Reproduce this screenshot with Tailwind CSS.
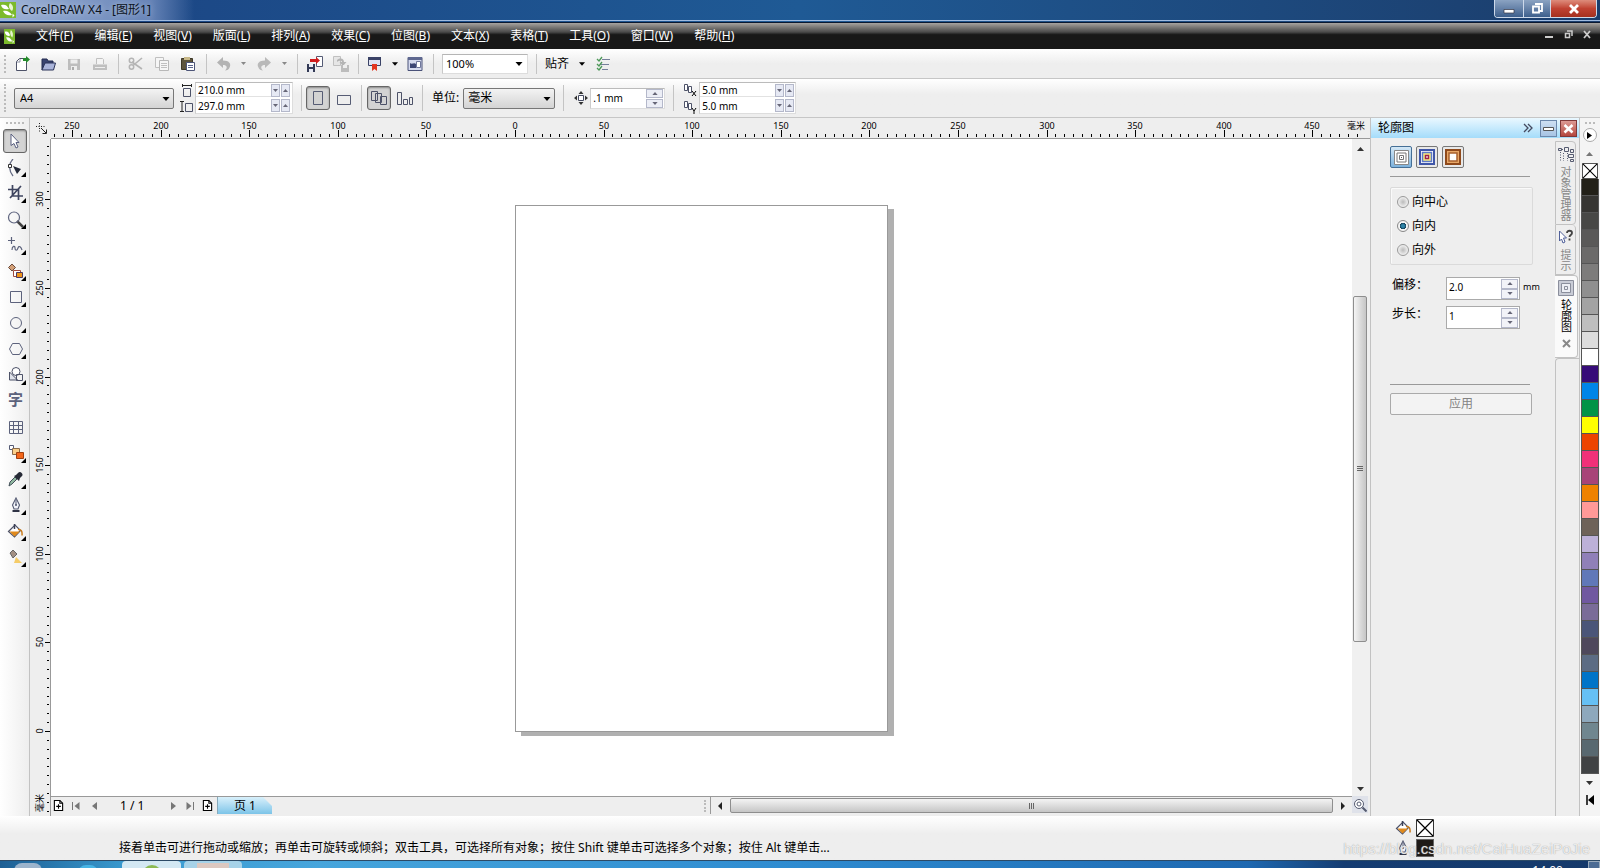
<!DOCTYPE html>
<html lang="zh-CN">
<head>
<meta charset="utf-8">
<title>CorelDRAW X4 - [图形1]</title>
<script src="https://cdn.jsdelivr.net/npm/@tailwindcss/browser@4"></script>
</head>
<body class="h-screen flex flex-col overflow-hidden bg-[#eee] text-black text-[12px] leading-4 font-['Noto_Sans','Noto_Sans_CJK_SC',sans-serif] select-none">

<svg class="hidden">
  <defs>
    <linearGradient id="face" x1="0" y1="0" x2="0" y2="1"><stop offset="0" stop-color="#fff"/><stop offset="1" stop-color="#d5d9e0"/></linearGradient>
    <symbol id="fly" viewBox="0 0 5 5"><path d="M5 0v5H0z" fill="#000"/></symbol>
    <symbol id="down" viewBox="0 0 7 4"><path d="M0 0h7L3.500 4z" fill="currentColor"/></symbol>
    <symbol id="up" viewBox="0 0 7 4"><path d="M0 4h7L3.500 0z" fill="currentColor"/></symbol>
    <symbol id="bucket" viewBox="0 0 16 16"><path d="M1.500 8.500 8 2l5.500 5.500L7.500 14z" fill="#fff" stroke="#4d5268" stroke-width="1.200"/><path d="M2.500 8.500h10.500L7.500 13.500z" fill="#e08a1c"/><path d="M7.500 1v5" stroke="#3a3f55" stroke-width="1.500"/><path d="M11 6.500c3-.5 4.500 1.500 4 6" fill="none" stroke="#c97a1a" stroke-width="1.500"/></symbol>
    <symbol id="nib" viewBox="0 0 16 16"><path d="M8 1 4.500 8l1.500 4h4l1.500-4z" fill="#f2f4fa" stroke="#545a72" stroke-width="1.100"/><path d="M8 3v5" stroke="#545a72"/><circle cx="8" cy="8" r="1" fill="#545a72"/><path d="M4.500 13h7v2h-7z" fill="#2e3244"/></symbol>
    <symbol id="nocolor" viewBox="0 0 18 18"><path d="M.5.5h17v17H.5z" fill="#fff" stroke="#333"/><path d="m1 1 16 16M17 1 1 17" stroke="#000" stroke-width="1.200"/></symbol>
    <symbol id="addpage" viewBox="0 0 12 14"><path d="M1.500 1.500h6l3 3v8h-9z" fill="#fff" stroke="#000" stroke-width="1.200"/><path d="M7.500 1.500v3h3M6 5.500v5M3.500 8h5" fill="none" stroke="#000" stroke-width="1.200"/></symbol>
    <symbol id="leaf" viewBox="0 0 16 16"><path d="M0 0h16v16H0z" fill="#7cba2c"/><path d="M1 3c4-1 6 0 8 4-4 1-7 0-8-4z" fill="#fff"/><path d="M10 1c3 2 4 5 2 8-3-2-4-5-2-8z" fill="#e7f5cf"/><path d="M3 9c4-1 7 1 9 4-4 1-7 0-9-4z" fill="#fff"/><path d="m12.500 11.500 2 2-2 2" fill="#fff"/></symbol>
  </defs>
</svg>

<!-- Title bar -->
<header class="h-[23px] shrink-0 flex items-start justify-between border-b border-[#0a1830] bg-linear-to-r from-[#1b4382] via-[#1f5a95] to-[#1b3d6c]">
  <div class="h-[21px] flex flex-1 items-center gap-[5px] border-b border-[#9fbbe0] bg-linear-to-r from-[#9fb3d6] from-0% via-[#6885b8] via-10% to-transparent to-13%">
    <svg class="size-4"><use href="#leaf"/></svg>
    <h1 class="text-[12px] text-[#0b1220] [text-shadow:0_0_6px_#fff8]">CorelDRAW X4 - [图形1]</h1>
  </div>
  <div class="h-[21px] flex border-b border-[#9fbbe0] pr-[3px]">
    <div class="h-[18px] flex rounded-b border border-t-0 border-[#cdd9ea] overflow-hidden">
      <button aria-label="最小化" class="w-7 flex justify-center items-center bg-linear-to-b from-[#8ba3c2] via-[#6682a8] via-50% to-[#3d5f8c]"><svg class="w-3 h-4"><path d="M1 8.500h10v3.500H1z" fill="#fff" stroke="#334" stroke-width=".7"/></svg></button>
      <button aria-label="还原" class="w-[27px] flex justify-center items-center border-l border-[#cdd9ea] bg-linear-to-b from-[#8ba3c2] via-[#6682a8] via-50% to-[#3d5f8c]"><svg class="w-3 h-4"><path d="M4 3h7v7h-2.500M2 5.500h6v6H2z" fill="none" stroke="#fff" stroke-width="1.800"/></svg></button>
      <button aria-label="关闭" class="w-[46px] flex justify-center items-center border-l border-[#cdd9ea] bg-linear-to-b from-[#dd8c7c] via-[#c04232] via-50% to-[#a5301f]"><svg class="w-3 h-4"><path d="m2 4 8 8M10 4l-8 8" stroke="#fff" stroke-width="2.800"/></svg></button>
    </div>
  </div>
</header>

<!-- Menu -->
<nav class="h-[26px] shrink-0 flex items-center bg-linear-to-b from-[#a8a4a0] from-0% via-[#4a4a4a] via-35% to-[#181818] to-45% text-white text-[12px]">
  <svg class="w-[11px] h-[15px] ml-1 mr-[21px]" viewBox="0 0 16 16" preserveAspectRatio="none"><use href="#leaf"/></svg>
  <div class="flex gap-[21px]">
    <button>文件(<u>F</u>)</button><button>编辑(<u>E</u>)</button><button>视图(<u>V</u>)</button><button>版面(<u>L</u>)</button><button>排列(<u>A</u>)</button><button>效果(<u>C</u>)</button><button>位图(<u>B</u>)</button><button>文本(<u>X</u>)</button><button>表格(<u>T</u>)</button><button>工具(<u>O</u>)</button><button>窗口(<u>W</u>)</button><button>帮助(<u>H</u>)</button>
  </div>
  <div class="ml-auto flex gap-[10px] pr-2 pb-1">
    <button aria-label="最小化文档"><svg class="size-[9px]"><path d="M0 6h8v2H0z" fill="#ccc"/></svg></button>
    <button aria-label="还原文档"><svg class="size-[9px]"><path d="M3 1h5v5M1.500 3.500h4v4h-4z" fill="none" stroke="#ccc" stroke-width="1.500"/></svg></button>
    <button aria-label="关闭文档"><svg class="size-[9px]"><path d="m1 1 6 7M7 1 1 8" stroke="#ccc" stroke-width="1.800"/></svg></button>
  </div>
</nav>

<!-- Standard toolbar -->
<div class="h-[30px] shrink-0 flex items-center bg-linear-to-b from-white to-[#eee] to-50% border-b border-[#c6c6c6] pl-1">
  <i class="h-[18px] border-l-2 border-dotted border-[#bbb]"></i>
  <div class="flex items-center gap-[10px] ml-2">
    <button aria-label="新建"><svg class="size-4"><path d="M2.500 5.500 5.500 2.500h7v12h-10z" fill="#fff" stroke="#4d5268"/><path d="M6 3v3H3" fill="none" stroke="#8c91a3"/><path d="M9 5h3v2l4-3.500L12 0v2H9z" fill="#258a2c"/></svg></button>
    <button aria-label="打开"><svg class="size-4"><path d="M2 14V3h5l1 2h5v3" fill="#3a4470" stroke="#232b50"/><path d="m2 14 3-7h10.500l-2 7z" fill="#aab4da" stroke="#2b3358"/></svg></button>
    <button aria-label="保存" disabled><svg class="size-4"><path d="M2 3h12v11H2z" fill="#bdbdbd"/><path d="M4.500 3.500h7v4h-7zM5 10h6v4H5z" fill="#ededed"/><path d="M6 11h2v3H6z" fill="#aaa"/></svg></button>
    <button aria-label="打印" disabled><svg class="size-4"><path d="M4.500 8V2.500h6l1 1V8" fill="#f4f4f4" stroke="#c0c0c0"/><path d="M1 8.500h14V14H1z" fill="#bfbfbf"/><path d="M3 11.500h10" stroke="#eee"/></svg></button>
  </div>
  <i class="w-px h-[20px] bg-[#c4c4c4] ml-[10px]"></i>
  <div class="flex items-center gap-[10px] ml-[9px]">
    <button aria-label="剪切" disabled><svg class="size-4"><path d="m14 2-9 7.500M14 13 4 6" stroke="#b4b4b4" stroke-width="1.600"/><circle cx="3.500" cy="4.500" r="2.200" fill="none" stroke="#b4b4b4" stroke-width="1.500"/><circle cx="3.500" cy="11" r="2.200" fill="none" stroke="#b4b4b4" stroke-width="1.500"/></svg></button>
    <button aria-label="复制" disabled><svg class="size-4"><path d="M1.500 1.500h8v10h-8z" fill="#f6f6f6" stroke="#c0c0c0"/><path d="M5.500 4.500h9v10h-9z" fill="#f6f6f6" stroke="#b8b8b8"/><path d="M7 7.500h6M7 9.500h6M7 11.500h6" stroke="#c0c0c0"/></svg></button>
    <button aria-label="粘贴"><svg class="size-4"><path d="M1.500 2.500h11v11h-11z" fill="#5d543c" stroke="#3e3828"/><path d="M4 1h6v3H4z" fill="#c8b98a"/><path d="M6.500 6.500h8v8h-8z" fill="#fff" stroke="#4d5578"/><path d="M8 9.500h5M8 11.500h5" stroke="#5b648c"/></svg></button>
  </div>
  <i class="w-px h-[20px] bg-[#c4c4c4] ml-[10px]"></i>
  <div class="flex items-center ml-[9px] text-[#888]">
    <button aria-label="撤消" disabled><svg class="size-4"><path d="M1 6.500 7 1v3.500c6 0 8 3 7 6-1 3-3 4-5 4 3-3 2-5.500-2-5.500V12z" fill="#b3b3b3"/></svg></button>
    <svg class="w-[5px] h-[3px] ml-[9px]"><use href="#down"/></svg>
    <button aria-label="重做" disabled class="ml-[10px]"><svg class="size-4"><path d="M15 6.500 9 1v3.500c-6 0-8 3-7 6 1 3 3 4 5 4-3-3-2-5.500 2-5.500V12z" fill="#b9b9b9"/></svg></button>
    <svg class="w-[5px] h-[3px] ml-[10px]"><use href="#down"/></svg>
  </div>
  <i class="w-px h-[20px] bg-[#c4c4c4] ml-[10px]"></i>
  <div class="flex items-center gap-2 ml-2">
    <button aria-label="导入"><svg class="size-[18px]"><path d="M10.500 1.500h6v10h-6z" fill="#fff" stroke="#555b75"/><path d="M4 4h6V2l4 3.500L10 9V7H4z" fill="#cf1c1c"/><path d="M1 9h8v8H1z" fill="#333a55"/><path d="M3 9h4v3H3zM3 14h4v3H3z" fill="#e8ebf5"/></svg></button>
    <button aria-label="导出" disabled><svg class="size-[18px]"><path d="M1.500 1.500h7v9h-7z" fill="#e6e6e6" stroke="#c0c0c0"/><path d="M5 5c4-3 7-1 7 2h2.500L11 11 7.500 7H10c0-1-2-2-5 0z" fill="#b4b4b4"/><path d="M9 10h8v7H9z" fill="#bcbcbc"/><path d="M11 10h4v3h-4z" fill="#eee"/></svg></button>
  </div>
  <i class="w-px h-[20px] bg-[#c4c4c4] ml-2"></i>
  <button aria-label="应用程序启动器" class="ml-2"><svg class="size-[16px]"><path d="M1.500 1.500h12v8h-12z" fill="#dfe3f2" stroke="#3a4266"/><path d="M1 1h13v3H1z" fill="#3a4266"/><path d="M5 8h5v7l-2.500-2L5 15z" fill="#e23522"/></svg></button>
  <svg class="w-[6px] h-[4px] ml-[9px] mr-[9px]"><use href="#down"/></svg>
  <button aria-label="欢迎屏幕"><svg class="size-[16px]"><path d="M1 1.500h14v13H1z" fill="#d5daee" stroke="#4a5279"/><path d="M1 1h14v3H1z" fill="#5f6890"/><path d="M3 7c2 2 4-1 6 1v4H3z" fill="#3c4674"/><path d="M9.500 5.500h4v6h-4z" fill="#fff" stroke="#6f779b"/></svg></button>
  <i class="w-px h-[20px] bg-[#c4c4c4] ml-[10px] mr-2"></i>
  <div class="relative">
    <select aria-label="缩放级别" class="appearance-none w-[86px] h-5 bg-white border border-[#ddd] border-t-[#b5b5b5] border-l-[#c8c8c8] pl-[3px] text-[11px]"><option>100%</option></select>
    <svg class="absolute right-[5px] top-2 w-[8px] h-[4px] pointer-events-none"><use href="#down"/></svg>
  </div>
  <i class="w-px h-[20px] bg-[#c4c4c4] ml-[8px] mr-[8px]"></i>
  <button class="flex items-center gap-[10px]">贴齐<svg class="w-[6px] h-[4px]"><use href="#down"/></svg></button>
  <button aria-label="选项" class="ml-[11px]"><svg class="size-4"><path d="M6 3.500h8M4 8.500h9M6 13.500h6" stroke="#76809a"/><path d="m1 3 2 2 3-4M1 8l2 2 3-4M1 12l2 2 3-4" fill="none" stroke="#4c9858" stroke-width="1.300"/></svg></button>
</div>

<!-- Property bar -->
<div class="h-[39px] shrink-0 flex items-center bg-linear-to-b from-white to-[#eee] to-40% border-b border-[#c6c6c6] pl-1 text-[10px]">
  <i class="h-[28px] border-l-2 border-dotted border-[#bbb]"></i>
  <div class="relative ml-2">
    <select aria-label="纸张类型" class="appearance-none w-[160px] h-[21px] rounded-[2px] border border-[#777] bg-linear-to-b from-[#f3f3f3] to-[#d4d4d4] pl-[5px] text-[11px]"><option>A4</option></select>
    <svg class="absolute right-[4px] top-[9px] w-[8px] h-[4px] pointer-events-none"><use href="#down"/></svg>
  </div>
  <div class="ml-[6px] flex flex-col gap-[3px]">
    <svg class="size-[13px]"><path d="M3.500 4.500h7v8h-7z" fill="url(#face)" stroke="#4d5268"/><path d="M2.500 0v3M11.500 0v3M3 1.500h8" stroke="#222"/></svg>
    <svg class="size-[13px]"><path d="M5.500 3.500h7v8h-7z" fill="url(#face)" stroke="#4d5268"/><path d="M0 1.500h4M0 11.500h4M2 2v9" stroke="#222"/></svg>
  </div>
  <div class="ml-[2px] grid grid-cols-[75px_auto] gap-y-px border border-[#ddd] border-t-[#bbb] border-l-[#ccc] h-[32px] items-center bg-white pr-[2px]">
    <input aria-label="纸张宽度" value="210.0 mm" class="w-full min-w-0 h-[14px] pl-[2px] border-b border-[#e2e2e2]">
    <span class="flex gap-[1px] text-[#667]"><button aria-label="减" class="w-[9px] h-[13px] bg-[#e6e9f4] border border-[#b4b8ca] grid place-items-center"><svg class="w-[5px] h-[3px]"><use href="#down"/></svg></button><button aria-label="加" class="w-[9px] h-[13px] bg-[#e6e9f4] border border-[#b4b8ca] grid place-items-center"><svg class="w-[5px] h-[3px]"><use href="#up"/></svg></button></span>
    <input aria-label="纸张高度" value="297.0 mm" class="w-full min-w-0 h-[14px] pl-[2px]">
    <span class="flex gap-[1px] text-[#667]"><button aria-label="减" class="w-[9px] h-[13px] bg-[#e6e9f4] border border-[#b4b8ca] grid place-items-center"><svg class="w-[5px] h-[3px]"><use href="#down"/></svg></button><button aria-label="加" class="w-[9px] h-[13px] bg-[#e6e9f4] border border-[#b4b8ca] grid place-items-center"><svg class="w-[5px] h-[3px]"><use href="#up"/></svg></button></span>
  </div>
  <i class="w-px h-[26px] bg-[#c4c4c4] ml-[8px] mr-1"></i>
  <button aria-label="纵向" class="size-[24px] rounded-[3px] border border-[#666] bg-[#d3d3d3] shadow-[inset_0_1px_2px_#888] grid place-items-center"><svg class="size-4"><path d="M3.500 1.500h9v13h-9z" fill="url(#face)" stroke="#565c74"/></svg></button>
  <button aria-label="横向" class="ml-[6px]"><svg class="size-4"><path d="M1.500 5.500h13v9h-13z" fill="url(#face)" stroke="#565c74"/></svg></button>
  <i class="w-px h-[26px] bg-[#c4c4c4] ml-[9px] mr-[5px]"></i>
  <button aria-label="设置所有页面" class="size-[24px] rounded-[3px] border border-[#666] bg-[#d3d3d3] shadow-[inset_0_1px_2px_#888] grid place-items-center"><svg class="size-[18px]"><path d="M1.500 2.500h6v9h-6zM5.500 4.500h6v9h-6zM10.500 7.500h6v8h-6z" fill="url(#face)" stroke="#4d5268"/></svg></button>
  <button aria-label="设置当前页面" class="ml-[5px]"><svg class="size-[18px]"><path d="M1.500 3.500h4v12h-4zM7.500 10.500h4v5h-4zM13.500 8.500h3v7h-3z" fill="url(#face)" stroke="#4d5268"/></svg></button>
  <i class="w-px h-[26px] bg-[#c4c4c4] ml-[8px] mr-[9px]"></i>
  <label for="unit" class="text-[12px]">单位:</label>
  <div class="relative ml-[4px]">
    <select id="unit" class="appearance-none w-[92px] h-[21px] rounded-[2px] border border-[#777] bg-linear-to-b from-[#f3f3f3] to-[#d4d4d4] pl-[4px] text-[12px]"><option>毫米</option></select>
    <svg class="absolute right-[4px] top-[9px] w-[8px] h-[4px] pointer-events-none"><use href="#down"/></svg>
  </div>
  <i class="w-px h-[26px] bg-[#c4c4c4] ml-[8px] mr-[10px]"></i>
  <svg class="size-[14px]"><path d="M7 0 4.500 3h5zM7 14l-2.500-3h5zM0 7l3-2.500v5zM14 7l-3-2.500v5z" fill="#333"/><path d="M4.500 4.500h5v5h-5z" fill="#fff" stroke="#444a60"/></svg>
  <div class="ml-[2px] flex items-center bg-white border border-[#ddd] border-t-[#bbb] border-l-[#ccc] h-[21px] text-[#667]">
    <input aria-label="微调偏移" value=".1 mm" class="w-[55px] pl-[2px] h-full text-black">
    <span class="flex flex-col gap-[1px] pr-[1px]"><button aria-label="加" class="w-[17px] h-[9px] bg-[#eceef6] border border-[#b4b8ca] grid place-items-center"><svg class="w-[6px] h-[3px]"><use href="#up"/></svg></button><button aria-label="减" class="w-[17px] h-[9px] bg-[#eceef6] border border-[#b4b8ca] grid place-items-center"><svg class="w-[6px] h-[3px]"><use href="#down"/></svg></button></span>
  </div>
  <i class="w-px h-[26px] bg-[#c4c4c4] ml-[8px] mr-[9px]"></i>
  <div class="flex flex-col gap-[3px]">
    <svg class="size-[14px]"><path d="M1.500 1.500h3v6h-3zM5.500 3.500h3v6h-3z" fill="#fff" stroke="#4d5268"/><path d="m9 8 4 5M13 8l-4 5" stroke="#000"/></svg>
    <svg class="size-[14px]"><path d="M1.500 1.500h3v6h-3zM5.500 3.500h3v6h-3z" fill="#fff" stroke="#4d5268"/><path d="m9 8 2 3 2-3M11 11v3" fill="none" stroke="#000"/></svg>
  </div>
  <div class="ml-[2px] grid grid-cols-[75px_auto] gap-y-px border border-[#ddd] border-t-[#bbb] border-l-[#ccc] h-[32px] items-center bg-white pr-[1px]">
    <input aria-label="再制距离 X" value="5.0 mm" class="w-full min-w-0 h-[14px] pl-[2px] border-b border-[#e2e2e2]">
    <span class="flex gap-[1px] text-[#667]"><button aria-label="减" class="w-[9px] h-[13px] bg-[#e6e9f4] border border-[#b4b8ca] grid place-items-center"><svg class="w-[5px] h-[3px]"><use href="#down"/></svg></button><button aria-label="加" class="w-[9px] h-[13px] bg-[#e6e9f4] border border-[#b4b8ca] grid place-items-center"><svg class="w-[5px] h-[3px]"><use href="#up"/></svg></button></span>
    <input aria-label="再制距离 Y" value="5.0 mm" class="w-full min-w-0 h-[14px] pl-[2px]">
    <span class="flex gap-[1px] text-[#667]"><button aria-label="减" class="w-[9px] h-[13px] bg-[#e6e9f4] border border-[#b4b8ca] grid place-items-center"><svg class="w-[5px] h-[3px]"><use href="#down"/></svg></button><button aria-label="加" class="w-[9px] h-[13px] bg-[#e6e9f4] border border-[#b4b8ca] grid place-items-center"><svg class="w-[5px] h-[3px]"><use href="#up"/></svg></button></span>
  </div>
</div>

<!-- Work area -->
<main class="flex-1 min-h-0 flex">
  <!-- Toolbox -->
  <aside class="w-[30px] shrink-0 border-r border-[#c2c2c2] bg-linear-to-r from-white to-[#eee] flex flex-col items-center pt-1">
    <i class="w-[18px] border-t-2 border-dotted border-[#bbb]"></i>
    <button aria-label="挑选工具" class="mt-[5px] mb-[2px] size-[24px] rounded-[3px] border border-[#666] bg-[#d3d3d3] shadow-[inset_0_1px_2px_#888] grid place-items-center"><svg class="size-4"><path d="m4 1 8 8.500H9l2 4.500-2 1-2-4.500-3 2z" fill="#fff" stroke="#5a6080"/></svg></button>
    <div class="flex flex-col text-[#4d5268]">
      <button aria-label="形状工具" class="size-[26px] py-[4px] pl-[5px]"><svg class="size-5" fill="none"><path d="M6 0C1 5 2 12 6 17" stroke="#666c85" stroke-width="1.300"/><path d="M1.500 5.500h3v3h-3z" fill="#fff" stroke="#333"/><path d="m6 7 8 3-4 5z" fill="#222838"/><use href="#fly" x="14" y="13" width="5" height="5"/></svg></button>
      <button aria-label="裁剪工具" class="size-[26px] py-[4px] pl-[5px]"><svg class="size-5" fill="none"><path d="M5.500 0v11H16M1 4.500h10.500V15M3 13 14 1" stroke="#3f4560" stroke-width="1.700"/><use href="#fly" x="14" y="13" width="5" height="5"/></svg></button>
      <button aria-label="缩放工具" class="size-[26px] py-[4px] pl-[5px]"><svg class="size-5"><path d="m10 10 6 6" stroke="#444" stroke-width="2.500"/><circle cx="7" cy="6.500" r="5.500" fill="url(#face)" stroke="#606680" stroke-width="1.200"/><use href="#fly" x="14" y="13" width="5" height="5"/></svg></button>
      <button aria-label="手绘工具" class="size-[26px] py-[4px] pl-[5px]"><svg class="size-5" fill="none"><path d="M4.500 0v7M1 3.500h7M5 13c0-4 3-5 3-2s2 3 3 0 3-1 4 2" stroke="#5c627c" stroke-width="1.200"/><use href="#fly" x="14" y="13" width="5" height="5"/></svg></button>
      <button aria-label="智能填充工具" class="size-[26px] py-[4px] pl-[5px]"><svg class="size-5"><path d="M1.500 4.500 5 1l3.500 3.500L5 8z" fill="#d3a078" stroke="#6a4a3c"/><path d="M6.500 7.500h7v6h-7z" fill="#fff" stroke="#a04a3c"/><path d="M9.500 9.500h6v5h-6z" fill="#ef9418" stroke="#4d3a60"/><use href="#fly" x="14" y="13" width="5" height="5"/></svg></button>
      <button aria-label="矩形工具" class="size-[26px] py-[4px] pl-[5px]"><svg class="size-5"><path d="M3.500 2.500h11v11h-11z" fill="url(#face)" stroke="#5c627c"/><use href="#fly" x="14" y="13" width="5" height="5"/></svg></button>
      <button aria-label="椭圆形工具" class="size-[26px] py-[4px] pl-[5px]"><svg class="size-5"><circle cx="9" cy="8" r="5.500" fill="url(#face)" stroke="#5c627c"/><use href="#fly" x="14" y="13" width="5" height="5"/></svg></button>
      <button aria-label="多边形工具" class="size-[26px] py-[4px] pl-[5px]"><svg class="size-5"><path d="M5.500 2.500h7l3 5.500-3 5.500h-7l-3-5.500z" fill="url(#face)" stroke="#5c627c"/><use href="#fly" x="14" y="13" width="5" height="5"/></svg></button>
      <button aria-label="基本形状" class="size-[26px] py-[4px] pl-[5px]"><svg class="size-5" stroke="#4d5268"><path d="M2.500 5v8h8z" fill="#dfe2ea"/><circle cx="9" cy="4.500" r="4" fill="#fff"/><path d="M9.500 7.500h6v6h-6z" fill="url(#face)"/><use href="#fly" x="14" y="13" width="5" height="5" stroke="none"/></svg></button>
      <button aria-label="文本工具" class="size-[26px] pb-[6px] pl-[2px] text-[15px] leading-5 font-bold text-[#5c627c] font-['Noto_Sans_CJK_SC',sans-serif]">字</button>
      <button aria-label="表格工具" class="size-[26px] py-[4px] pl-[5px]"><svg class="size-5"><path d="M2.500 2.500h13v12h-13z" fill="url(#face)"/><path d="M2.500 2.500h13v12h-13zM2.500 6.500h13M2.500 10.500h13M6.500 2.500v12M11.500 2.500v12" fill="none" stroke="#5c627c"/></svg></button>
      <button aria-label="交互式调和工具" class="size-[26px] py-[4px] pl-[5px]"><svg class="size-5"><path d="M2.500.5h4v4h-4z" fill="#fff" stroke="#555b75"/><path d="M5.500 3.500h7v6h-7z" fill="#fbd08a" stroke="#8a6a4a"/><path d="M9.500 7.500h7v6h-7z" fill="#f4661a" stroke="#a04010"/><use href="#fly" x="14" y="13" width="5" height="5"/></svg></button>
      <button aria-label="滴管工具" class="size-[26px] py-[4px] pl-[5px]"><svg class="size-5"><path d="m2 15 1-4 5-5 2 2-5 5z" fill="#8fb8a0" stroke="#44505a"/><path d="m7 5 2-1 2-2c2-3 6 1 4 3l-2 2-1 3z" fill="#262a36"/><use href="#fly" x="14" y="13" width="5" height="5"/></svg></button>
      <button aria-label="轮廓工具" class="size-[26px] py-[4px] pl-[5px]"><svg class="size-5"><use href="#nib" x="1" width="16" height="16"/><use href="#fly" x="14" y="13" width="5" height="5"/></svg></button>
      <button aria-label="填充工具" class="size-[26px] py-[4px] pl-[5px]"><svg class="size-5"><use href="#bucket" width="16" height="16"/><use href="#fly" x="14" y="13" width="5" height="5"/></svg></button>
      <button aria-label="交互式填充工具" class="size-[26px] py-[4px] pl-[5px]"><svg class="size-5"><path d="m3 4 3-3 4 4-4 4z" fill="#a39084" stroke="#666"/><path d="m9 8 6 6H7z" fill="#f5cc68"/><use href="#fly" x="14" y="13" width="5" height="5"/></svg></button>
    </div>
  </aside>

  <!-- Drawing window -->
  <section class="flex-1 min-w-0 grid grid-cols-[21px_1fr_18px] grid-rows-[21px_1fr_20px]">
    <div class="grid place-items-center pl-[3px]"><svg class="size-3" fill="none" stroke="#222"><path d="M3.500 0v10M0 3.500h10" stroke-dasharray="1 1.500"/><path d="m5 5 5 5M10.500 6.500v4h-4"/></svg></div>
    <svg id="hruler" class="w-full h-full border-b border-[#999] col-span-2 text-[9px] leading-3" fill="#000"></svg>
    <svg id="vruler" class="w-full h-full border-r border-[#999] text-[9px] row-span-2" fill="#000"></svg>
    <div class="relative bg-white overflow-hidden">
      <!-- Page on the free canvas -->
      <div class="absolute left-[464px] top-[66px] w-[373px] h-[527px] bg-white border border-[#999] shadow-[6px_4px_0_#b0b0b0]"></div>
    </div>
    <div class="flex flex-col items-center pt-2 pb-[5px] pr-[2px] bg-[#f0f0f0] text-[#333]">
      <svg class="w-[7px] h-[4px] shrink-0"><use href="#up"/></svg>
      <div class="flex-[145] min-h-0"></div>
      <div class="flex-[344] w-[14px] rounded-[2px] border border-[#8e8e8e] bg-linear-to-r from-[#f4f4f4] to-[#c6c6c6] grid place-items-center"><svg class="size-2"><path d="M1 1.500h6M1 3.500h6M1 5.500h6" stroke="#666"/></svg></div>
      <div class="flex-[145] min-h-0"></div>
      <svg class="w-[7px] h-[4px] shrink-0"><use href="#down"/></svg>
    </div>
    <div class="flex items-start border-t border-[#999] text-[#777]">
      <div class="w-[660px] h-[17px] flex items-center border-r border-[#999] pl-[2px]">
        <button aria-label="添加页面"><svg class="w-[11px] h-[13px]"><use href="#addpage"/></svg></button>
        <button aria-label="首页" class="ml-[8px]"><svg class="size-2"><path d="M.5 0v8" stroke="#777"/><path d="M7.500 0v8L2.500 4z" fill="#777"/></svg></button>
        <button aria-label="上一页" class="ml-[10px]"><svg class="size-2"><path d="M7 0v8L2 4z" fill="#777"/></svg></button>
        <span class="ml-[22px] w-[28px] text-[12px] text-black whitespace-nowrap">1 / 1</span>
        <button aria-label="下一页" class="ml-[22px]"><svg class="size-2"><path d="M1 0v8l5-4z" fill="#777"/></svg></button>
        <button aria-label="末页" class="ml-2"><svg class="size-2"><path d="M7.500 0v8" stroke="#777"/><path d="M.5 0v8l5-4z" fill="#777"/></svg></button>
        <button aria-label="添加页面" class="ml-2"><svg class="w-[11px] h-[13px]"><use href="#addpage"/></svg></button>
        <button class="ml-[4px] self-start w-[55px] h-[17px] text-[12px] leading-[15px] text-black bg-linear-to-b from-[#d8f0fb] to-[#7cc4e8] border-l border-[#8ab] [clip-path:polygon(0_0,46px_0,100%_9px,100%_100%,0_100%)]">页 1</button>
        <i class="ml-auto mr-1 h-3 border-l-2 border-dotted border-[#bbb]"></i>
      </div>
      <div class="flex-1 h-[17px] flex items-center pl-[6px] pr-[6px]">
        <svg class="w-[5px] h-2"><path d="M5 0v8L1 4z" fill="#222"/></svg>
        <div class="flex-1 ml-2 mr-2 h-[15px] rounded-[2px] border border-[#8e8e8e] bg-linear-to-b from-[#f4f4f4] to-[#c6c6c6] grid place-items-center"><svg class="size-2"><path d="M1.500 1v6M3.500 1v6M5.500 1v6" stroke="#666"/></svg></div>
        <svg class="w-[5px] h-2"><path d="M0 0v8l4-4z" fill="#222"/></svg>
      </div>
    </div>
    <button aria-label="导航器" class="bg-[#dfe2ea] mb-[3px] mr-[2px] grid place-items-center"><svg class="size-[14px]" fill="none" stroke="#555b70"><circle cx="6" cy="6" r="4.500" fill="#fff"/><circle cx="6" cy="6" r="2"/><path d="m9.500 9.500 4 4" stroke-width="2"/></svg></button>
  </section>

  <!-- Docker -->
  <aside class="w-[209px] shrink-0 border-l border-[#c2c2c2] flex flex-col">
    <div class="h-[20px] shrink-0 flex items-center pl-[7px] bg-linear-to-b from-[#eaf8ff] to-[#a4dcfa]">
      <h2 class="text-[12px]">轮廓图</h2>
      <button aria-label="折叠" class="ml-auto"><svg class="size-[10px]" fill="none" stroke="#444a60" stroke-width="1.300"><path d="m1 1 4 4-4 4M5 1l4 4-4 4"/></svg></button>
      <button aria-label="最小化泊坞窗" class="ml-[7px] size-[17px] border border-[#6c88ac] bg-linear-to-b from-[#cddff2] to-[#a8c4e4] grid place-items-center"><svg class="w-[11px] h-2"><path d="M.5 3.500h10v3H.5z" fill="#fff" stroke="#555"/></svg></button>
      <button aria-label="关闭泊坞窗" class="ml-[3px] mr-[2px] size-[17px] border border-[#803838] bg-linear-to-b from-[#dc9a94] to-[#b4463e] grid place-items-center"><svg class="size-[11px]"><path d="m1.500 2 8 7.500M9.500 2l-8 7.500" stroke="#fff" stroke-width="2.600"/></svg></button>
    </div>
    <div class="flex-1 min-h-0 flex">
      <div class="flex-1 pl-[19px] pt-2">
        <div class="flex gap-1">
          <button aria-label="轮廓图步长" class="size-[22px] rounded-[2px] border border-[#456f96] bg-linear-to-b from-[#d4e8f6] to-[#7db2dc] grid place-items-center"><svg class="size-[15px]"><path d="M.5.5h14v14H.5z" fill="#fff" stroke="#888"/><path d="M3 3h9v9H3zM5.500 5.500h4v4h-4z" fill="none" stroke="#777"/><path d="M7 7h1v1H7z" fill="#555"/></svg></button>
          <button aria-label="轮廓线颜色" class="size-[22px] rounded-[2px] border border-[#777] bg-[#e8e8e8] grid place-items-center"><svg class="size-[16px]"><path d="M1 1h14v14H1z" fill="#fff" stroke="#3f56a8" stroke-width="2"/><path d="M3.500 3.500h9v9h-9z" fill="#f6ec80" stroke="#5d78c8" stroke-width="1.500"/><path d="M6.500 6.500h3v3h-3z" fill="#fff" stroke="#a0204a" stroke-width="1.500"/></svg></button>
          <button aria-label="轮廓图加速" class="size-[22px] rounded-[2px] border border-[#777] bg-[#e8e8e8] grid place-items-center"><svg class="size-[16px]"><path d="M1 1h14v14H1z" fill="#e8a868" stroke="#8f4a1c" stroke-width="2"/><path d="M4 4h8v8H4z" fill="#fff" stroke="#a8602c" stroke-width="1.500"/></svg></button>
        </div>
        <hr class="mt-2 mr-[25px] border-[#999]">
        <fieldset class="mt-[10px] mr-[22px] h-[78px] rounded-[2px] border border-[#dadada] shadow-[inset_1px_1px_0_#fafafa] pl-[6px] flex flex-col justify-center gap-2">
          <label class="flex items-center gap-[3px]"><input type="radio" name="dir" class="appearance-none size-3 rounded-full border border-[#999] bg-[radial-gradient(circle,#bbb,#f0f0f0_70%)]">向中心</label>
          <label class="flex items-center gap-[3px]"><input type="radio" name="dir" checked class="appearance-none size-3 rounded-full border border-[#888] bg-[radial-gradient(circle,#2f84a8_20%,#134058_42%,#f4f4f4_50%)]">向内</label>
          <label class="flex items-center gap-[3px]"><input type="radio" name="dir" class="appearance-none size-3 rounded-full border border-[#999] bg-[radial-gradient(circle,#bbb,#f0f0f0_70%)]">向外</label>
        </fieldset>
        <div class="mt-3 ml-[2px] grid grid-cols-[54px_74px_auto] gap-y-[6px] text-[#667]">
          <label for="offset" class="text-black">偏移：</label>
          <div class="flex items-center h-[23px] bg-white border border-[#aaa]"><input id="offset" value="2.0" class="w-0 flex-1 pl-[2px] pb-1 text-[10px] text-black"><span class="flex flex-col pr-[1px]"><button aria-label="加" class="w-[17px] h-[10px] bg-[#f2f3f8] border border-[#b4b8ca] grid place-items-center"><svg class="w-[6px] h-[3px]"><use href="#up"/></svg></button><button aria-label="减" class="w-[17px] h-[10px] bg-[#f2f3f8] border border-[#b4b8ca] grid place-items-center"><svg class="w-[6px] h-[3px]"><use href="#down"/></svg></button></span></div>
          <span class="pl-[3px] pt-[2px] text-[9px] text-black">mm</span>
          <label for="steps" class="text-black">步长：</label>
          <div class="flex items-center h-[23px] bg-white border border-[#aaa]"><input id="steps" value="1" class="w-0 flex-1 pl-[2px] pb-1 text-[10px] text-black"><span class="flex flex-col pr-[1px]"><button aria-label="加" class="w-[17px] h-[10px] bg-[#f2f3f8] border border-[#b4b8ca] grid place-items-center"><svg class="w-[6px] h-[3px]"><use href="#up"/></svg></button><button aria-label="减" class="w-[17px] h-[10px] bg-[#f2f3f8] border border-[#b4b8ca] grid place-items-center"><svg class="w-[6px] h-[3px]"><use href="#down"/></svg></button></span></div>
        </div>
        <hr class="mt-[55px] mr-[25px] border-[#999]">
        <button disabled class="mt-2 w-[142px] h-[22px] rounded-[2px] border border-[#aaa] bg-[#f3f3f3] text-[#838383]">应用</button>
      </div>
      <div class="w-6 shrink-0 flex flex-col items-start text-[11px] leading-[13px] text-[#888] font-['Noto_Sans_CJK_SC',sans-serif]">
        <button class="mt-[3px] w-[21px] h-[84px] rounded-r border border-[#c2c2c2] flex flex-col items-center gap-1 pt-1"><svg class="size-4 shrink-0" fill="none" stroke="#555b70"><path d="M.5 2.500h3v2h-3zM6.500 1.500h4v4h-4zM12.500 3.500h3v3h-3zM10.500 8.500h5v3h-5zM12.500 13.500h3v2h-3z"/><path d="M4 3.500h3M2.500 6v9M5.500 7v8M9.500 7v8" stroke-dasharray="1 1.500"/></svg><span class="[writing-mode:vertical-rl] [text-orientation:upright]">对象管理器</span></button>
        <button class="w-[21px] h-[50px] rounded-r border border-t-0 border-[#c2c2c2] flex flex-col items-center gap-1 pt-1"><svg class="size-4 shrink-0" fill="none"><path d="m1.500 2 7 7h-3l1.500 4-2 1-1.500-4-2 2z" fill="#fff" stroke="#50609a"/><path d="M9 4c0-3 5-3 5 0 0 2-2.500 2-2.500 4M11.500 9.500v2" stroke="#444" stroke-width="1.800"/></svg><span class="[writing-mode:vertical-rl] [text-orientation:upright]">提示</span></button>
        <button class="w-[23px] h-[83px] rounded-r border border-l-0 border-[#c2c2c2] bg-[#fafafa] flex flex-col items-center gap-[3px] pt-1 text-black"><svg class="size-4 shrink-0" fill="#eceef4" stroke="#8a8e9c"><path d="M.5.500h15v15H.5z" fill="#c9ccd6"/><path d="M3.500 3.500h9v9h-9z"/><path d="M6.500 6.500h3v3h-3z"/></svg><span class="[writing-mode:vertical-rl] [text-orientation:upright]">轮廓图</span><svg class="size-[9px] mt-1 shrink-0"><path d="m1 1 7 7M8 1 1 8" stroke="#888" stroke-width="2"/></svg></button>
        <div class="flex-1 w-full border-l border-t rounded-tl-[4px] border-[#c2c2c2]"></div>
      </div>
    </div>
  </aside>

  <!-- Colour palette -->
  <aside class="w-[21px] shrink-0 border-l border-[#c2c2c2] bg-[#f4f4f4] flex flex-col items-center pt-1 pr-px text-[#777]">
    <i class="w-[10px] border-t-2 border-dotted border-[#bbb]"></i>
    <button aria-label="调色板菜单" class="mt-[4px] size-[14px] shrink-0 rounded-full border border-[#aaa] bg-white grid place-items-center"><svg class="w-[5px] h-[7px]"><path d="M0 0v7l5-3.500z" fill="#000"/></svg></button>
    <svg class="w-[7px] h-[4px] mt-[10px] mb-[7px] shrink-0"><use href="#up"/></svg>
    <button aria-label="无颜色" class="size-4 shrink-0"><svg class="size-4" viewBox="0 0 18 18"><use href="#nocolor"/></svg></button>
    <div id="palette" class="w-[18px]"></div>
    <svg class="w-[7px] h-[4px] mt-[7px] text-[#333] shrink-0"><use href="#down"/></svg>
    <svg class="w-2 h-[10px] mt-[10px] shrink-0"><path d="M1 0v10" stroke="#000" stroke-width="1.500"/><path d="M8 0v10L2 5z"/></svg>
  </aside>
</main>

<!-- Status bar -->
<footer class="relative h-[44px] shrink-0 bg-linear-to-b from-white to-[#eee] to-40% flex items-start">
  <p class="ml-[119px] mt-6 text-[12px]">接着单击可进行拖动或缩放；再单击可旋转或倾斜；双击工具，可选择所有对象；按住 Shift 键单击可选择多个对象；按住 Alt 键单击...</p>
  <div class="ml-auto mr-[166px] mt-[3px] grid grid-cols-[16px_18px] gap-x-[5px] gap-y-[2px] items-center">
    <svg class="size-4"><use href="#bucket"/></svg><svg class="size-[18px]"><use href="#nocolor"/></svg>
    <svg class="size-4"><use href="#nib"/></svg><span class="size-[18px] bg-[#1f1a17] border border-[#666]"></span>
  </div>
  <p class="absolute right-[10px] bottom-[3px] text-[15px] leading-4 text-white/80 [text-shadow:0_0_1px_#888] font-['Liberation_Sans',sans-serif]">https://blog.csdn.net/CaiHuaZeiPoJie</p>
</footer>

<!-- Taskbar -->
<div class="h-2 shrink-0 flex items-start overflow-hidden border-t border-[#2c4a66] bg-[linear-gradient(90deg,#1d5f94,#3a9bd0_8%,#46a5dc_20%,#2e8bd0_50%,#1e68b0_78%,#143c72_84%,#15396a)] pl-[14px]">
  <i class="w-[28px] h-4 mt-[2px] rounded-full bg-[#9cb4cc]"></i>
  <i class="ml-[36px] w-5 h-4 mt-1 rounded-full bg-[#48b4e4]"></i>
  <i class="ml-6 w-[59px] h-4 rounded-t bg-[#d3e8f3] flex justify-center"><b class="mt-1 size-5 rounded-full bg-[#8cba54]"></b></i>
  <i class="ml-[3px] w-[58px] h-4 rounded-t bg-[#a6d2e8] flex justify-center"><b class="mt-[2px] w-8 h-4 bg-[#dcc8c0]"></b></i>
  <time class="ml-auto mt-1 mr-[25px] text-[12px] leading-[12px] text-white">14:00</time>
  <i class="w-3 h-4 bg-[#4c6c94] border border-[#9ab]"></i>
</div>

<script>
  const NS = 'http://www.w3.org/2000/svg';
  const SCALE = 1.772;               // pixels per millimetre
  const add = (svg, name, attrs, text) => {
    const el = document.createElementNS(NS, name);
    for (const k in attrs) el.setAttribute(k, attrs[k]);
    if (text !== undefined) el.textContent = text;
    svg.appendChild(el);
  };
  const h = document.getElementById('hruler');
  for (let mm = -260; mm <= 475; mm += 5) {
    const x = Math.round(464 + mm * SCALE), major = mm % 50 === 0;
    add(h, 'rect', { x, y: major ? 12 : 16, width: 1, height: major ? 7 : 3 });
    if (major && mm <= 450) add(h, 'text', { x, y: 11, 'text-anchor': 'middle' }, Math.abs(mm));
  }
  add(h, 'text', { x: 1296, y: 11 }, '毫米');
  const v = document.getElementById('vruler');
  for (let mm = -45; mm <= 330; mm += 5) {
    const y = Math.round(592 - mm * SCALE), major = mm % 50 === 0;
    add(v, 'rect', { x: major ? 15 : 17, y, width: major ? 5 : 2, height: 1 });
    if (major && y < 640) add(v, 'text', { transform: `translate(13 ${y}) rotate(-90)`, 'text-anchor': 'middle' }, Math.abs(mm));
  }
  add(v, 'text', { transform: 'translate(13 673) rotate(-90)' }, '毫米');

  const colours = ['#222018','#363532','#484846','#5a5958','#6b6a69','#7d7c7b','#8f8f8f','#a3a3a3','#bebebe','#dcdcdc','#fff','#360b78','#0085e8','#009347','#ff0','#ec4400','#f03078','#a84478','#ef8200','#ff9998','#6e6259','#bcb0d8','#9080b8','#6078b8','#7058a0','#7a6c98','#4a5578','#4e485c','#5c6c84','#0074c8','#66c0f5','#8ea8bc','#70868f','#586870','#404244'];
  const palette = document.getElementById('palette');
  for (const c of colours) {
    const b = document.createElement('button');
    b.className = 'block w-full h-[17px] border border-t-0 border-[#555]';
    b.style.backgroundColor = c;
    b.setAttribute('aria-label', c);
    palette.appendChild(b);
  }
</script>
</body>
</html>
